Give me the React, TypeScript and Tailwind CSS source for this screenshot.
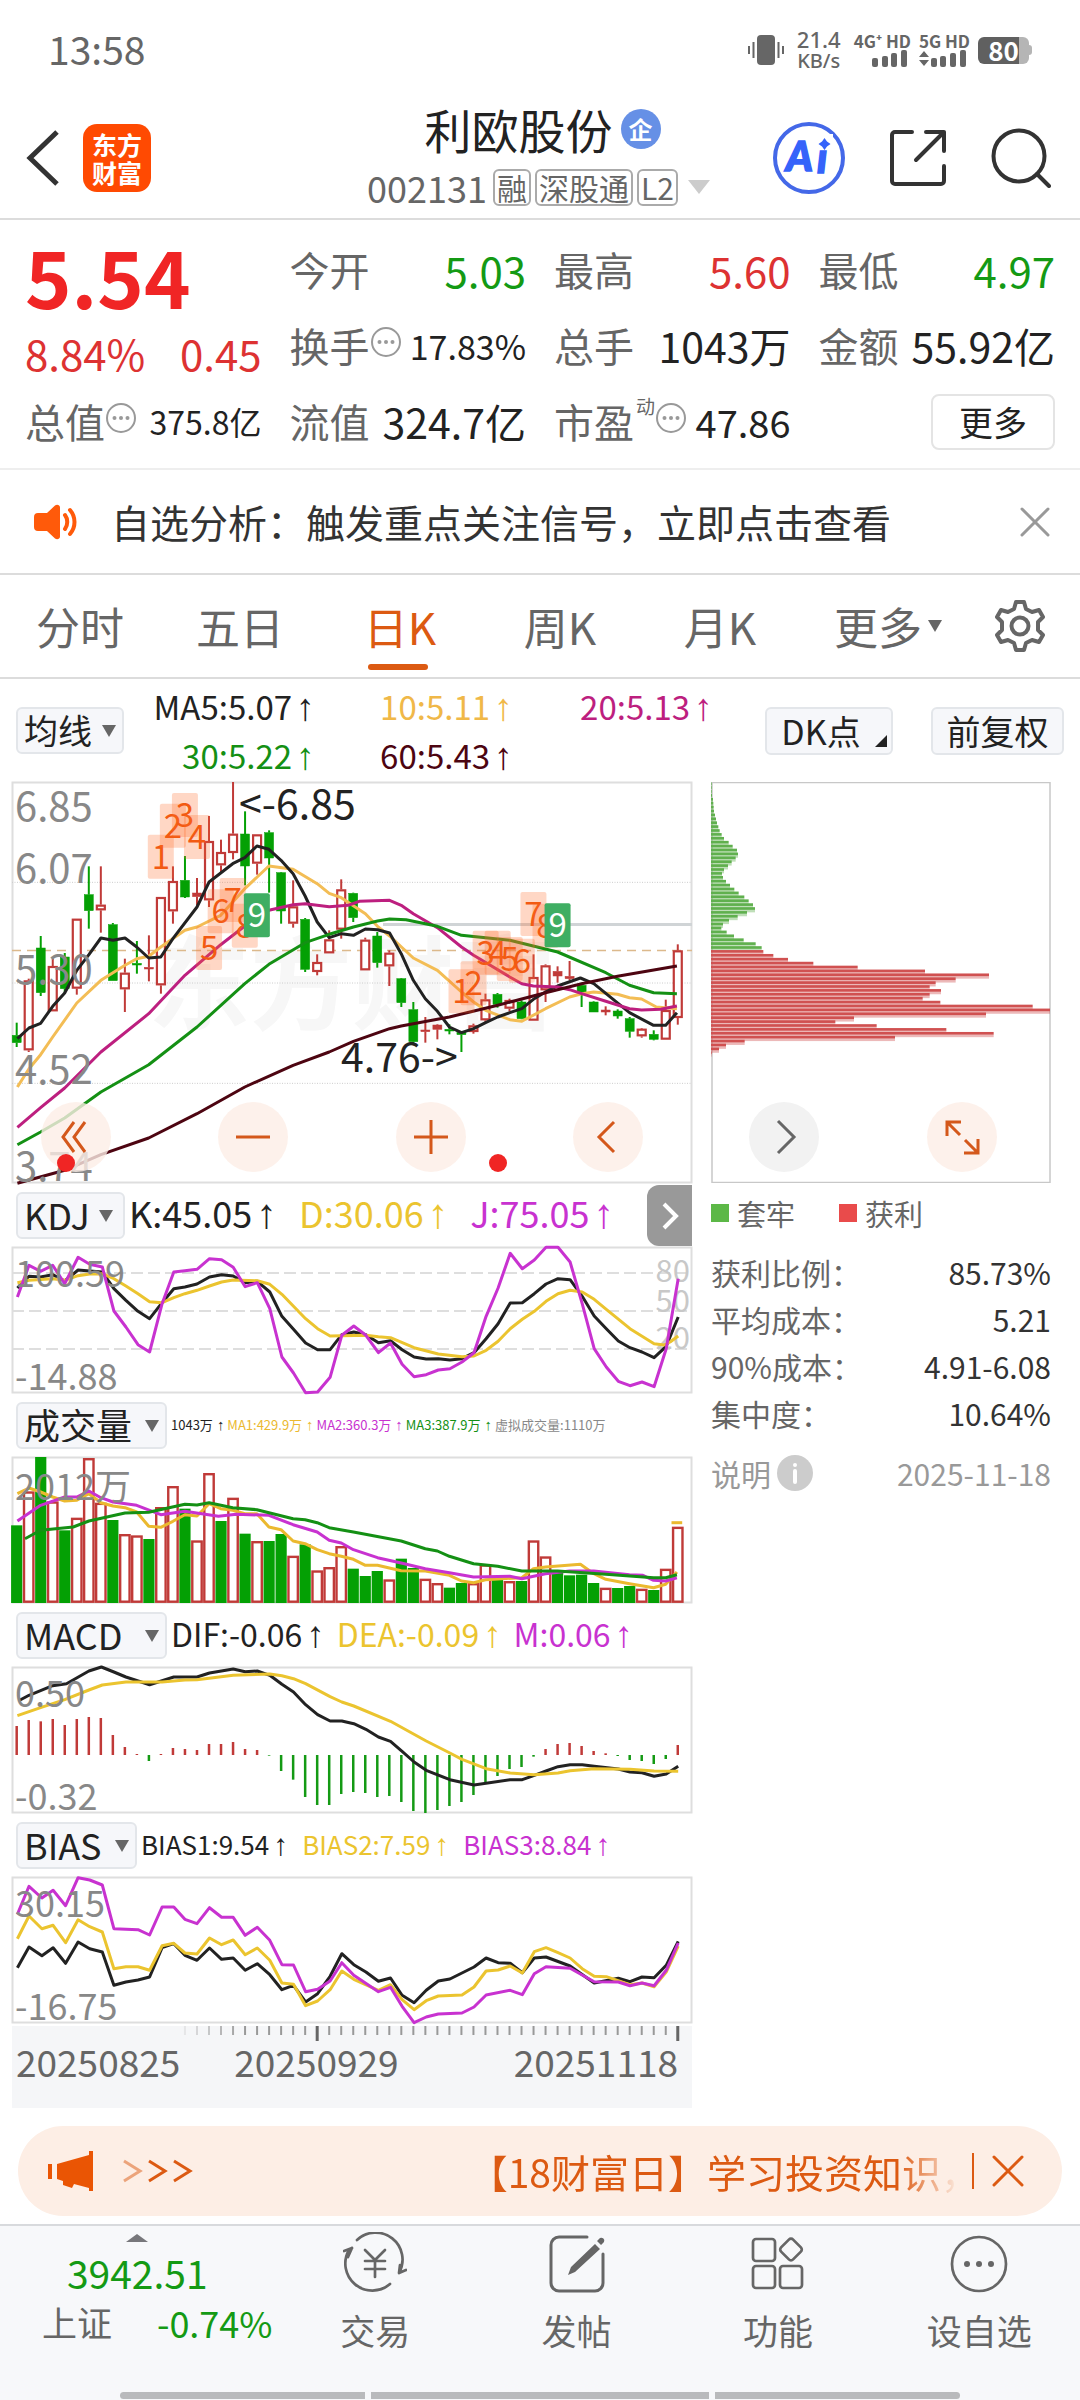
import React from "react";

const FONT = "font-['Noto_Sans_CJK_SC','Noto_Sans',sans-serif]";

/* ---------- chart data ---------- */

// Chart data lives on a 1522-unit wide grid; each unit row is a third of a pixel high.
const GRID_LEFT = 28;
const UNIT_X = 2.238;
const px = (x: number) => (x - GRID_LEFT) / UNIT_X;
const slot = (i: number) => px(38.5 + i * 26.9);

function trace(points: string, top: number) {
  return points
    .split(" ")
    .map((p) => {
      const [x, y] = p.split(",").map(Number);
      return `${px(x).toFixed(1)},${((y - top) / 3).toFixed(1)}`;
    })
    .join(" ");
}

type Candle = [kind: "g" | "r", bodyTop: number, bodyBottom: number, high: number, low: number];

const candles: Candle[] = [
  ["g", 790, 812, 752, 825], ["r", 625, 835, 620, 840], ["g", 528, 662, 492, 672], ["r", 582, 718, 560, 718],
  ["g", 555, 650, 543, 665], ["r", 440, 650, 440, 668], ["g", 368, 416, 283, 470], ["r", 398, 415, 283, 482],
  ["g", 458, 626, 453, 626], ["r", 602, 652, 560, 720], ["g", 574, 579, 507, 605], ["r", 586, 591, 490, 628],
  ["r", 375, 640, 375, 665], ["r", 327, 418, 283, 455], ["g", 325, 375, 252, 378], ["r", 363, 374, 318, 400],
  ["r", 207, 385, 132, 405], ["r", 240, 280, 203, 300], ["r", 185, 243, 30, 262], ["g", 186, 282, 118, 340],
  ["r", 187, 275, 187, 308], ["g", 182, 258, 175, 362], ["g", 302, 417, 300, 455], ["r", 403, 455, 325, 467],
  ["g", 442, 592, 438, 600], ["r", 570, 600, 547, 610], ["r", 502, 544, 475, 544], ["r", 352, 473, 322, 500],
  ["g", 364, 437, 362, 450], ["r", 503, 595, 497, 595], ["g", 492, 572, 480, 587], ["r", 542, 583, 535, 642],
  ["g", 620, 692, 618, 705], ["g", 713, 809, 690, 817], ["r", 774, 779, 735, 812], ["r", 759, 772, 757, 802],
  ["g", 772, 777, 757, 787], ["g", 781, 788, 780, 840], ["r", 760, 780, 755, 785], ["r", 682, 745, 665, 752],
  ["g", 667, 697, 663, 707], ["r", 684, 710, 680, 718], ["g", 690, 740, 685, 742], ["r", 615, 746, 547, 746],
  ["r", 580, 655, 577, 690], ["r", 598, 612, 583, 632], ["r", 613, 620, 567, 625], ["g", 640, 660, 632, 705],
  ["g", 690, 720, 688, 720], ["r", 714, 720, 703, 730], ["g", 717, 732, 712, 740], ["g", 740, 778, 735, 797],
  ["r", 770, 793, 768, 797], ["g", 787, 802, 775, 805], ["r", 714, 803, 683, 803], ["r", 535, 738, 517, 758],
];

const averages = [
  { color: "#f3bd55", points: "40,945 66,890 92,848 119,795 173,693 227,625 281,580 307,560 334,553 361,525 415,475 442,465 495,430 549,350 603,282 657,292 711,335 738,364 765,377 819,425 846,463 873,492 926,558 980,595 1034,660 1061,690 1088,715 1142,743 1169,748 1222,710 1276,675 1303,665 1330,660 1383,667 1410,677 1437,681 1470,705 1516,710" },
  { color: "#222222", points: "40,800 66,768 92,754 119,703 146,663 173,595 200,548 227,498 254,505 281,498 307,525 334,558 361,555 388,500 442,405 469,330 522,275 549,257 576,222 603,232 630,265 657,305 684,372 711,450 738,497 765,485 792,490 819,471 846,473 873,483 899,545 926,625 953,680 980,718 1007,765 1034,782 1061,770 1088,752 1115,735 1142,722 1169,710 1195,682 1222,660 1249,642 1300,618 1330,635 1410,722 1464,760 1491,760 1516,722" },
  { color: "#bd1f7f", points: "40,1066 92,1007 146,948 227,840 334,725 415,610 495,518 549,462 603,415 657,398 684,395 738,404 780,400 805,388 873,385 899,400 926,425 980,467 1034,525 1061,550 1142,615 1169,635 1195,642 1249,645 1276,653 1303,665 1357,688 1410,710 1437,714 1480,712 1516,702" },
  { color: "#149014", points: "40,1118 92,1080 146,1038 227,960 334,878 442,765 549,635 603,577 684,512 738,487 792,465 846,447 873,441 910,443 980,463 1034,490 1142,505 1249,540 1357,602 1410,640 1464,662 1516,665" },
  { color: "#4d0511", points: "40,1234 146,1195 227,1148 334,1098 442,1025 549,945 657,880 738,840 792,808 873,770 899,762 1007,735 1115,700 1222,662 1303,635 1383,613 1516,582" },
];

const counts: [label: string, x: number, top: number][] = [
  ["1", 361, 188], ["2", 388, 95], ["3", 415, 63], ["4", 442, 129], ["5", 469, 462], ["6", 495, 352],
  ["7", 522, 318], ["8", 549, 395], ["9", 576, 364],
  ["1", 1034, 592], ["2", 1061, 568], ["3", 1088, 476], ["4", 1115, 476], ["5", 1142, 495], ["6", 1169, 500],
  ["7", 1195, 360], ["8", 1222, 395], ["9", 1249, 394],
];

const volumes =
  "g1030 r928 g825 r958 g1045 r1007 r828 r962 g1014 r1056 r1060 g1071 r975 r912 g980 r1075 r873 g1017 r947 g1055 r1077 g1077 g1056 r1121 g1087 r1165 r1155 r1092 g1160 g1182 g1167 r1192 g1130 g1158 r1190 r1203 g1217 g1203 r1203 r1147 g1190 r1197 g1197 r1075 r1123 g1172 g1180 g1178 g1203 r1217 g1218 g1212 r1220 g1224 r1160 r1034"
    .split(" ")
    .map((v) => ({ up: v[0] === "r", y: Number(v.slice(1)) }));

const macdBars = [
  387, 369, 373, 366, 384, 366, 360, 363, 414, 450, 471, 492, 471, 453, 456, 459, 441, 441, 435, 456, 459, 476, 522,
  548, 600, 624, 624, 591, 585, 588, 600, 597, 615, 642, 648, 639, 627, 615, 594, 561, 537, 516, 510, 479, 456, 441,
  438, 447, 462, 469, 477, 489, 492, 501, 486, 444,
];

const costBars = [
  2, 2, 2, 3, 6, 7, 8, 9, 12, 15, 18, 22, 26, 32, 39, 53, 65, 78, 81, 74, 62, 51, 39, 33, 36, 45, 57, 70, 83, 100, 113,
  126, 132, 108, 80, 54, 36, 31, 47, 69, 98, 134, 152, 157, 187, 231, 307, 440, 642, 834, 734, 674, 656, 690, 656,
  635, 688, 965, 1017, 825, 429, 373, 497, 706, 848, 552, 101, 45, 24, 2,
];

/* ---------- small pieces ---------- */

function Up() {
  return <span className="ml-1 font-['Liberation_Sans',sans-serif] text-[1.15em] leading-none">↑</span>;
}

function MoreDots() {
  return (
    <svg viewBox="0 0 32 32" className="mb-2 size-8 shrink-0" fill="none" stroke="#999" strokeWidth="2" aria-hidden="true">
      <circle cx="16" cy="16" r="14" />
      <g fill="#999" stroke="none">
        <circle cx="9.500" cy="16" r="2" />
        <circle cx="16" cy="16" r="2" />
        <circle cx="22.500" cy="16" r="2" />
      </g>
    </svg>
  );
}

function Quote({ label, children, className = "", dots }: { label: React.ReactNode; children: React.ReactNode; className?: string; dots?: boolean }) {
  return (
    <div className="flex h-[75px] items-center whitespace-nowrap">
      <span className="text-[40px] text-[#666]">{label}</span>
      {dots && <MoreDots />}
      <span className={`ml-auto ${className}`}>{children}</span>
    </div>
  );
}

function Picker({ label, options, className, arrow = "right-3" }: { label: string; options: string[]; className: string; arrow?: string }) {
  return (
    <div className={`relative shrink-0 ${className}`}>
      <select
        aria-label={label}
        className="block h-[47px] w-full appearance-none rounded-md border-2 border-[#e3e6ea] bg-[#f6f7fa] pb-0.5 pl-1.5 leading-none text-[#222]"
      >
        {options.map((o) => (
          <option key={o}>{o}</option>
        ))}
      </select>
      <svg viewBox="0 0 14 12" className={`pointer-events-none absolute top-[18px] h-3 w-3.5 ${arrow}`} fill="#666" aria-hidden="true">
        <path d="M0 0h14L7 12z" />
      </svg>
    </div>
  );
}

function Panel({ height, label, children }: { height: number; label: string; children: React.ReactNode }) {
  return (
    <svg viewBox={`0 0 680 ${height}`} className="block w-full overflow-visible" role="img" aria-label={label}>
      <rect x="0.500" y="0.500" width="679" height={height - 1} fill="none" stroke="#dedede" strokeWidth="2" />
      {children}
    </svg>
  );
}

function Line({ points, top, color }: { points: string; top: number; color: string }) {
  return <polyline points={trace(points, top)} fill="none" stroke={color} strokeWidth="3" strokeLinejoin="round" />;
}

function Axis({ y, children }: { y: number; children: React.ReactNode }) {
  return (
    <text x="3" y={y} fontSize="36" fill="#888">
      {children}
    </text>
  );
}

function RoundButton({ label, grey, children }: { label: string; grey?: boolean; children: React.ReactNode }) {
  return (
    <button
      type="button"
      aria-label={label}
      className={`flex size-[70px] items-center justify-center rounded-full ${grey ? "bg-[#f2f2f2]" : "bg-[#fdeee6]/80"}`}
    >
      <svg viewBox="0 0 40 40" className="size-10" fill="none" stroke={grey ? "#666" : "#d4581b"} strokeWidth="3">
        {children}
      </svg>
    </button>
  );
}

/* ---------- charts ---------- */

function PriceChart() {
  return (
    <div className="relative">
      <Panel height={401} label="日K线图">
        <text x="136" y="240" fontSize="102" fontWeight="700" fill="#f7f7f7">东方财富</text>
        {[331, 633, 934].map((y) => (
          <line key={y} x1="0" x2="680" y1={(y - 30) / 3} y2={(y - 30) / 3} stroke="#ccc" strokeDasharray="1 1.500" />
        ))}
        <line x1="371" x2="680" y1="142.500" y2="142.500" stroke="#d0d4d6" strokeWidth="3" />
        <line x1="0" x2="680" y1="168.500" y2="168.500" stroke="#dcb98c" strokeWidth="1.500" strokeDasharray="9 6" />
        {candles.map(([kind, top, bottom, high, low], i) => {
          const x = slot(i);
          const y = (top - 30) / 3;
          const h = (bottom - top) / 3;
          const color = kind === "g" ? "#04a004" : "#c03a38";
          const hollow = kind === "r" && h > 5;
          return (
            <g key={i} stroke={color} strokeWidth="2">
              <line x1={x} x2={x} y1={(high - 30) / 3} y2={y} />
              <line x1={x} x2={x} y1={y + h} y2={(low - 30) / 3} />
              {hollow ? (
                <rect x={x - 4} y={y + 1} width="8" height={h - 2} fill="#fff" strokeWidth="2.200" />
              ) : (
                <rect x={x - 4.500} y={y} width="9" height={h} fill={color} strokeWidth="0.500" />
              )}
            </g>
          );
        })}
        {averages.map((a) => (
          <Line key={a.color} points={a.points} top={30} color={a.color} />
        ))}
        {counts.map(([label, x, top], i) => {
          const nine = label === "9";
          return (
            <g key={i}>
              <rect x={px(x) - 13} y={(top - 30) / 3} width="26" height="44" rx="2" fill={nine ? "#3fae63" : "#ff6a2a"} fillOpacity={nine ? 1 : 0.27} />
              <text x={px(x)} y={(top - 30) / 3 + 34} fontSize="33" textAnchor="middle" fill={nine ? "#fff" : "#f25a12"}>{label}</text>
            </g>
          );
        })}
        {[["6.85", 39], ["6.07", 101], ["5.30", 202], ["4.52", 302], ["3.74", 399]].map(([t, y]) => (
          <text key={t} x="3" y={y} fontSize="40" fill="#888">{t}</text>
        ))}
        <text x="227" y="37" fontSize="41" fill="#222">&lt;-6.85</text>
        <text x="329" y="290" fontSize="41" fill="#222">4.76-&gt;</text>
      </Panel>
      <div className="absolute right-[49px] bottom-[11px] left-[29px] flex justify-between">
        <RoundButton label="快速左移"><path d="M18 5 7 20l11 15M29 5 18 20l11 15" /></RoundButton>
        <RoundButton label="缩小"><path d="M3 20h34" /></RoundButton>
        <RoundButton label="放大"><path d="M3 20h34M20 3v34" /></RoundButton>
        <RoundButton label="左移"><path d="M26 5 11 20l15 15" /></RoundButton>
      </div>
      <i className="absolute bottom-[11px] left-[45px] size-[18px] rounded-full bg-[#f02524]" />
      <i className="absolute bottom-[11px] left-[477px] size-[18px] rounded-full bg-[#f02524]" />
    </div>
  );
}

function KdjChart() {
  return (
    <Panel height={146} label="KDJ">
      {[26, 64, 102].map((y) => (
        <line key={y} x1="0" x2="680" y1={y} y2={y} stroke="#dedede" strokeWidth="2" strokeDasharray="12 5" />
      ))}
      {[["80", 35], ["50", 65], ["20", 102]].map(([t, y]) => (
        <text key={t} x="678" y={y} fontSize="31" textAnchor="end" fill="#c8c8c8">{t}</text>
      ))}
      <Line top={195} color="#222" points="40,318 66,283 92,285 119,278 146,297 176,264 202,267 230,270 256,320 283,355 310,388 336,410 364,362 390,320 415,315 442,306 470,285 497,278 523,282 550,302 577,298 605,330 632,403 658,442 685,483 712,503 740,503 766,458 793,450 820,458 848,482 875,476 901,503 928,525 955,531 982,530 1008,534 1035,530 1062,512 1089,470 1116,425 1143,363 1170,362 1197,335 1223,306 1250,290 1277,293 1304,343 1331,402 1358,440 1385,477 1411,497 1438,510 1465,527 1492,493 1519,405" />
      <Line top={195} color="#ebc42f" points="40,302 66,295 119,290 146,295 176,281 202,276 230,275 256,290 283,312 310,335 336,359 364,362 390,347 415,335 442,325 470,312 497,300 523,294 577,296 605,307 632,337 658,373 685,410 712,440 740,462 820,460 848,464 875,467 928,497 982,516 1035,524 1062,522 1089,505 1116,478 1143,440 1170,412 1197,388 1223,358 1250,335 1277,325 1304,330 1331,352 1358,382 1411,440 1465,485 1487,489 1503,478 1519,462" />
      <Line top={195} color="#c832d0" points="40,345 66,250 92,268 119,250 146,305 176,226 202,247 230,255 256,387 283,435 310,488 336,510 364,365 390,270 415,266 442,262 470,230 497,233 523,256 550,314 577,302 605,380 632,525 658,573 685,632 712,630 740,586 766,460 793,432 820,460 848,512 875,483 901,547 928,584 955,578 982,564 1008,560 1035,540 1062,512 1089,403 1116,318 1143,214 1170,260 1197,234 1223,196 1250,196 1277,240 1304,365 1331,500 1358,555 1385,598 1411,611 1438,600 1465,614 1492,500 1519,290" />
      <Axis y={40}>100.59</Axis>
      <Axis y={143}>-14.88</Axis>
    </Panel>
  );
}

function VolumeChart() {
  return (
    <Panel height={146} label="成交量">
      {volumes.map(({ up, y }, i) => {
        const top = (y - 825) / 3;
        return up ? (
          <rect key={i} x={slot(i) - 4.700} y={top + 1.200} width="9.400" height={143.500 - top} fill="#fff" stroke="#c03a38" strokeWidth="2.400" />
        ) : (
          <rect key={i} x={slot(i) - 5.600} y={top} width="11.200" height={146 - top} fill="#04a004" />
        );
      })}
      <Line top={825} color="#ebb92f" points="40,935 66,918 92,930 119,945 146,957 173,955 200,935 227,962 254,972 281,977 307,990 334,1033 361,1036 388,1018 415,998 442,1002 469,965 495,980 522,985 549,995 576,995 603,1035 630,1043 657,1077 684,1085 711,1103 738,1115 765,1123 792,1132 819,1150 846,1150 899,1166 953,1167 1007,1180 1034,1197 1061,1202 1088,1193 1169,1187 1195,1160 1222,1155 1300,1147 1330,1175 1357,1192 1410,1205 1464,1217 1491,1207 1516,1170" />
      <Line top={825} color="#c832d0" points="40,1017 92,970 146,945 173,945 200,927 227,947 254,960 307,970 361,998 415,988 490,1003 530,997 603,1000 657,1028 711,1050 738,1075 765,1083 792,1103 846,1127 899,1143 953,1160 1007,1172 1061,1185 1142,1183 1169,1190 1222,1175 1276,1167 1330,1167 1410,1178 1440,1180 1464,1195 1491,1197 1516,1187" />
      <Line top={825} color="#149014" points="57,1070 92,1045 165,1035 200,1017 281,993 334,991 415,967 442,969 469,962 522,977 576,983 657,1010 684,1013 711,1022 738,1037 792,1050 899,1077 953,1100 980,1107 1007,1123 1061,1145 1115,1153 1169,1167 1249,1167 1357,1177 1464,1187 1491,1187 1516,1178" />
      <Line top={825} color="#ebb92f" points="1504,1022 1528,1022" />
      <Axis y={43}>2012万</Axis>
    </Panel>
  );
}

function MacdChart() {
  return (
    <Panel height={146} label="MACD">
      {macdBars.map((y, i) => (
        <line key={i} x1={slot(i)} x2={slot(i)} y1="88" y2={(y - 210) / 3} stroke={y > 474 ? "#149a14" : "#c03a38"} strokeWidth="2.500" />
      ))}
      <Line top={210} color="#222" points="45,310 66,295 119,266 150,260 200,222 228,210 256,225 283,240 336,263 390,240 442,240 470,228 523,216 550,224 577,222 605,235 632,262 658,285 685,323 712,353 740,372 766,372 793,380 820,397 848,420 875,433 901,463 928,495 955,520 1008,548 1062,564 1143,548 1170,548 1197,535 1223,522 1250,509 1277,503 1304,503 1331,508 1385,516 1411,525 1438,527 1465,538 1492,531 1519,508" />
      <Line top={210} color="#ebc42f" points="40,356 92,332 146,308 200,279 230,264 283,255 364,255 415,249 442,248 523,235 605,231 632,236 658,245 685,260 740,299 766,315 793,327 875,373 955,432 1008,468 1035,487 1089,515 1143,528 1197,533 1250,528 1277,521 1331,515 1411,517 1465,522 1519,523" />
      <Axis y={40}>0.50</Axis>
      <Axis y={143}>-0.32</Axis>
    </Panel>
  );
}

function BiasChart() {
  return (
    <Panel height={146} label="BIAS">
      <Line top={840} color="#222" points="40,1112 66,1050 95,1076 120,1052 148,1099 176,1035 202,1055 230,1065 256,1165 283,1155 310,1149 336,1140 364,1052 390,1040 415,1075 442,1090 470,1053 497,1087 523,1083 550,1120 577,1100 605,1133 632,1178 658,1165 685,1215 712,1190 740,1138 766,1070 793,1103 820,1125 848,1153 875,1143 901,1195 928,1217 955,1180 982,1152 1008,1146 1062,1110 1089,1083 1116,1097 1143,1099 1170,1127 1197,1083 1223,1080 1277,1107 1331,1158 1385,1144 1411,1154 1438,1140 1465,1142 1492,1105 1519,1033" />
      <Line top={840} color="#ebc42f" points="40,1025 66,957 95,995 120,985 148,1037 176,968 202,989 230,1005 256,1115 283,1109 310,1109 336,1120 364,1046 390,1039 415,1068 442,1071 470,1023 497,1043 523,1029 550,1073 577,1053 605,1090 632,1158 658,1162 685,1226 712,1212 740,1178 766,1122 793,1147 848,1180 875,1163 901,1208 928,1238 955,1211 982,1197 1035,1194 1062,1170 1089,1122 1116,1119 1143,1107 1170,1128 1197,1064 1223,1052 1250,1067 1277,1083 1304,1115 1331,1138 1358,1139 1411,1163 1438,1158 1465,1169 1492,1125 1519,1047" />
      <Line top={840} color="#c832d0" points="40,952 66,868 95,903 120,880 148,926 176,842 202,849 230,864 256,995 310,998 336,1014 364,930 390,930 415,967 442,980 470,932 497,961 523,961 550,1015 577,991 605,1030 632,1103 658,1104 685,1184 712,1177 740,1152 766,1097 793,1135 848,1184 875,1171 901,1228 928,1277 955,1260 982,1251 1035,1248 1062,1230 1089,1194 1143,1180 1170,1193 1197,1130 1223,1109 1277,1114 1331,1154 1385,1155 1411,1166 1438,1158 1465,1166 1492,1120 1519,1038" />
      <Axis y={40}>30.15</Axis>
      <Axis y={143}>-16.75</Axis>
    </Panel>
  );
}

function TimeAxis() {
  return (
    <div className="mt-[3px] bg-[#f5f6f8] pb-7">
      <svg viewBox="0 0 680 16" className="block w-full" aria-hidden="true">
        {Array.from({ length: 42 }, (_, n) => n + 14).map((i) => {
          const major = i === 25 || i === 55;
          return (
            <line
              key={i}
              x1={slot(i)}
              x2={slot(i)}
              y1="0"
              y2={major ? 15 : 9}
              stroke={major ? "#666" : "#999"}
              strokeWidth={major ? 3 : 2}
              opacity={Math.min(1, (i - 13) / 6)}
            />
          );
        })}
      </svg>
      <div className="flex pr-[14px] pl-1 text-[37px] leading-[38px] text-[#666]">
        <span>20250825</span>
        <span className="ml-[54px]">20250929</span>
        <span className="ml-auto">20251118</span>
      </div>
    </div>
  );
}

function IndicatorRow({ children }: { children: React.ReactNode }) {
  return <div className="relative flex h-16 items-center whitespace-nowrap pl-1 leading-none">{children}</div>;
}

/* ---------- right column ---------- */

function CostPanel() {
  return (
    <aside>
      <div className="relative">
        <svg viewBox="0 0 340 401" className="block w-full" role="img" aria-label="筹码分布">
          <rect x="1" y="0.500" width="338" height="400" fill="none" stroke="#c8c8c8" strokeWidth="1.500" />
          {costBars.map((w, j) => {
            const green = j < 43;
            const y = (5 + 11.7 * j) / 3;
            return (
              <g key={j} fill={green ? "#60b04e" : "#d05151"}>
                <rect x="0" y={y + 1.300} width={w / 3} height="2.600" opacity="0.400" />
                <rect x="0" y={y - 1.300} width={w / 3} height="2.700" />
              </g>
            );
          })}
        </svg>
        <div className="absolute right-[54px] bottom-[11px] left-[38px] flex justify-between">
          <RoundButton label="右移" grey><path d="m14 4 16 16-16 16" /></RoundButton>
          <RoundButton label="全屏"><path d="M5 19V5h14M6 6l12 12M36 22v14H22M35 35 23 23" /></RoundButton>
        </div>
      </div>
      <div className="flex items-center pt-2 text-[29px] leading-[44px] text-[#666]">
        <i className="mr-2 size-[18px] bg-[#5cb847]" />套牢
        <i className="mr-2 ml-[44px] size-[18px] bg-[#e94b4b]" />获利
      </div>
      <dl className="mt-[14px] grid grid-cols-[auto_auto] text-[30px] leading-[47px]">
        {[["获利比例：", "85.73%"], ["平均成本：", "5.21"], ["90%成本：", "4.91-6.08"], ["集中度：", "10.64%"]].map(([k, v]) => (
          <React.Fragment key={k}>
            <dt className="text-[#666]">{k}</dt>
            <dd className="text-right text-[#333]">{v}</dd>
          </React.Fragment>
        ))}
      </dl>
      <div className="mt-[13px] flex items-center text-[30px] leading-[46px] text-[#999]">
        说明
        <button type="button" aria-label="说明" className="ml-1.5 flex size-9 items-center justify-center rounded-full bg-[#ccc]">
          <svg viewBox="0 0 36 36" className="size-9" stroke="#fff" strokeWidth="4" strokeLinecap="round">
            <path d="M18 16v11M18 10v.1" />
          </svg>
        </button>
        <time className="ml-auto">2025-11-18</time>
      </div>
    </aside>
  );
}

/* ---------- page sections ---------- */

function StatusBar() {
  return (
    <div className="flex h-[100px] items-center px-12 text-[#666]">
      <span className="pb-1 text-[39px] leading-none">13:58</span>
      <div className="ml-auto flex items-center">
        <svg viewBox="0 0 36 32" className="h-8 w-9" fill="#666" aria-hidden="true">
          <rect x="9" y="1" width="18" height="30" rx="4" />
          <path d="M4.500 8h2v16h-2zM0 12h2v8H0zM29.500 8h2v16h-2zM34 12h2v8h-2z" />
        </svg>
        <div className="ml-3 w-[46px] text-center font-['Noto_Sans'] text-[22px] leading-[20px] font-medium">
          21.4<br /><span className="text-[20px]">KB/s</span>
        </div>
        <div className="ml-3 text-[17px] leading-[15px] font-bold whitespace-nowrap">
          4G⁺ HD
          <svg viewBox="0 0 36 17" className="mt-0.5 ml-[18px] h-[17px] w-9" fill="#666" aria-hidden="true">
            <rect y="8" width="6" height="9" rx="2" /><rect x="10" y="6" width="6" height="11" rx="2" />
            <rect x="19" y="3" width="6" height="14" rx="2" /><rect x="29" width="6" height="17" rx="2" />
          </svg>
        </div>
        <div className="ml-2 text-[17px] leading-[15px] font-bold whitespace-nowrap">
          5G HD
          <svg viewBox="0 0 47 17" className="mt-0.5 h-[17px] w-[47px]" fill="#666" aria-hidden="true">
            <path d="m5 1 5 6H0zM5 16l5-6H0z" />
            <rect x="12" y="8" width="6" height="9" rx="2" /><rect x="21" y="6" width="6" height="11" rx="2" />
            <rect x="31" y="3" width="6" height="14" rx="2" /><rect x="41" width="6" height="17" rx="2" />
          </svg>
        </div>
        <div className="ml-2 flex items-center">
          <div className="flex h-[27px] w-[51px] items-center justify-center rounded-md bg-linear-to-r from-[#606060] from-80% to-[#b5b5b5] to-80% text-[26px] leading-none font-bold text-white">
            80
          </div>
          <i className="h-2.5 w-[3px] rounded-r bg-[#b5b5b5]" />
        </div>
      </div>
    </div>
  );
}

function Tag({ children }: { children: React.ReactNode }) {
  return <span className="rounded-md border-2 border-[#aaa] px-[2px] text-[30px] leading-[33px]">{children}</span>;
}

function Header() {
  return (
    <header className="grid h-[120px] grid-cols-[1fr_auto_1fr] items-center border-b-2 border-[#dcdcdc] pr-[29px] pb-6 pl-[26px]">
      <div className="flex items-center">
        <button type="button" aria-label="返回">
          <svg viewBox="0 0 34 56" className="h-14 w-[34px]" fill="none" stroke="#333" strokeWidth="5">
            <path d="M31 2 4 28l27 26" />
          </svg>
        </button>
        <a href="#home" className="ml-[23px] flex size-[68px] items-center justify-center rounded-[14px] bg-[#ff4a02] text-center text-[25px] leading-[28px] font-bold text-white">
          东方<br />财富
        </a>
      </div>
      <div className="flex flex-col items-center">
        <h1 className="flex items-center gap-2 pl-2 text-[47px] leading-[58px] text-[#222]">
          利欧股份
          <span className="flex size-10 items-center justify-center rounded-full bg-[#6690e6] text-[24px] leading-none font-bold text-white">企</span>
        </h1>
        <div className="flex items-center gap-1 text-[36px] leading-[58px] text-[#666]">
          002131
          <span className="flex gap-1 pl-0.5">
            <Tag>融</Tag>
            <Tag>深股通</Tag>
            <Tag>L2</Tag>
          </span>
          <svg viewBox="0 0 22 14" className="ml-1.5 h-3.5 w-[22px]" fill="#ccc" aria-hidden="true"><path d="M0 0h22L11 14z" /></svg>
        </div>
      </div>
      <div className="flex items-center justify-end gap-11">
        <button type="button" aria-label="Ai 助手">
          <svg viewBox="0 0 72 72" className="size-[72px]">
            <circle cx="36" cy="36" r="34" fill="none" stroke="#4468e8" strokeWidth="4" />
            <text x="13" y="49" fontSize="41" fontWeight="900" fontStyle="italic" fontFamily="Lato" fill="#3563fa" stroke="#3563fa" strokeWidth="1.500">A</text>
            <text x="44" y="51" fontSize="41" fontWeight="900" fontStyle="italic" fontFamily="Lato" fill="#3563fa" stroke="#3563fa" strokeWidth="1.500">i</text>
            <path d="M43 12h17v16H43z" fill="#fff" />
            <path d="m51.500 16 2.500 3.500 3.500 2.500-3.500 2.500-2.500 3.500-2.500-3.500-3.500-2.500 3.500-2.500z" fill="#3563fa" />
          </svg>
        </button>
        <button type="button" aria-label="分享">
          <svg viewBox="0 0 58 58" className="size-[58px]" fill="none" stroke="#333" strokeWidth="4" strokeLinecap="round" strokeLinejoin="round">
            <path d="M23 3H6a3 3 0 0 0-3 3v46a3 3 0 0 0 3 3h46a3 3 0 0 0 3-3V37M37 3h18v19M55 3 27 31" />
          </svg>
        </button>
        <button type="button" aria-label="搜索">
          <svg viewBox="0 0 60 60" className="size-[60px]" fill="none" stroke="#333" strokeWidth="4" strokeLinecap="round">
            <circle cx="28" cy="28" r="25.500" />
            <path d="m46 46 12 12" />
          </svg>
        </button>
      </div>
    </header>
  );
}

function Quotes() {
  return (
    <section className="grid grid-cols-4 gap-x-7 border-b-2 border-[#eee] px-[25px] pt-[12px] pb-[9px] leading-[75px] text-[#222]">
      <div className="row-span-2 text-[#dd3232]">
        <div className="pt-2 text-[79px] leading-[70px] font-bold text-[#f02525]">5.54</div>
        <div className="flex justify-between pt-3 text-[42px] leading-[62px]">
          <span>8.84%</span>
          <span>0.45</span>
        </div>
      </div>
      <Quote label="今开" className="text-[42px] text-[#149a14]">5.03</Quote>
      <Quote label="最高" className="text-[42px] text-[#dd3232]">5.60</Quote>
      <Quote label="最低" className="text-[42px] text-[#149a14]">4.97</Quote>
      <Quote label="换手" dots className="text-[34px]">17.83%</Quote>
      <Quote label="总手" className="text-[41px]">1043万</Quote>
      <Quote label="金额" className="text-[41px]">55.92亿</Quote>
      <Quote label="总值" dots className="text-[32px]">375.8亿</Quote>
      <Quote label="流值" className="text-[41px]">324.7亿</Quote>
      <Quote label={<>市盈<sup className="-top-6 ml-0.5 text-[19px]">动</sup></>} dots className="text-[38px]">47.86</Quote>
      <div className="flex items-center justify-end">
        <button type="button" className="w-[124px] rounded-lg border-2 border-[#e4e4e4] text-[34px] leading-[52px]">更多</button>
      </div>
    </section>
  );
}

function Notice() {
  return (
    <div className="flex h-[105px] items-center border-b-2 border-[#dcdcdc] pr-[30px] pl-[34px] text-[39px] text-[#333]">
      <svg viewBox="0 0 44 36" className="h-9 w-11 shrink-0" fill="#ff5a0a" aria-hidden="true">
        <path d="M4 9h9L21 1.500c2-1.500 5-.500 5 2v29c0 2.500-3 3.500-5 2L13 27H4a4 4 0 0 1-4-4V13a4 4 0 0 1 4-4z" />
        <path d="M31 11c3 4 3 10 0 14M36 6c6 7 6 17 0 24" fill="none" stroke="#ff5a0a" strokeWidth="4" strokeLinecap="round" />
      </svg>
      <a href="#signal" className="ml-[33px] whitespace-nowrap">自选分析：触发重点关注信号，立即点击查看</a>
      <button type="button" aria-label="关闭" className="ml-auto">
        <svg viewBox="0 0 30 30" className="size-[30px]" stroke="#999" strokeWidth="3" strokeLinecap="round"><path d="m2 2 26 26M28 2 2 28" /></svg>
      </button>
    </div>
  );
}

function Tabs() {
  return (
    <nav className="grid h-[104px] grid-cols-[repeat(6,160fr)_120fr] border-b-2 border-[#dcdcdc] text-[44px] text-[#666]">
      {["分时", "五日", "日K", "周K", "月K"].map((t) => (
        <button
          key={t}
          type="button"
          className={t === "日K" ? "relative text-[#dc5a12]" : ""}
        >
          {t}
          {t === "日K" && <i className="absolute bottom-[7px] left-12 h-[6px] w-[60px] rounded-full bg-[#dc5a12]" />}
        </button>
      ))}
      <button type="button" className="flex items-center justify-center gap-1.5 pl-4">
        更多
        <svg viewBox="0 0 14 12" className="h-3 w-3.5" fill="#666" aria-hidden="true"><path d="M0 0h14L7 12z" /></svg>
      </button>
      <button type="button" aria-label="设置" className="flex items-center justify-center">
        <svg viewBox="0 0 52 52" className="size-[52px]" fill="none" stroke="#666" strokeWidth="4" strokeLinejoin="round">
          <path d="M22 2h8l2 7 6 3 7-2 4 7-5 5v8l5 5-4 7-7-2-6 3-2 7h-8l-2-7-6-3-7 2-4-7 5-5v-8l-5-5 4-7 7 2 6-3z" />
          <circle cx="26" cy="26" r="8.500" />
        </svg>
      </button>
    </nav>
  );
}

function ChartToolbar() {
  return (
    <div className="flex h-[103px] items-center pr-4 pl-4 text-[34px] leading-[49px] whitespace-nowrap">
      <Picker label="主图指标" options={["均线", "BOLL"]} className="w-[108px]" arrow="right-2" />
      <div className="grid grid-cols-[191px_198px_200px] text-right text-[33px]">
        <span className="text-[#222]">MA5:5.07<Up /></span>
        <span className="text-[#f0b848]">10:5.11<Up /></span>
        <span className="text-[#bd1f7f]">20:5.13<Up /></span>
        <span className="text-[#149014]">30:5.22<Up /></span>
        <span className="text-[#4d0511]">60:5.43<Up /></span>
      </div>
      <button type="button" className="relative ml-auto w-[128px] rounded-md border-2 border-[#e3e6ea] bg-[#f6f7fa] pr-4 leading-[44px] text-[#222]">
        DK点
        <svg viewBox="0 0 12 12" className="absolute right-1 bottom-1.5 size-3" fill="#222" aria-hidden="true"><path d="M12 0v12H0z" /></svg>
      </button>
      <button type="button" className="ml-[38px] w-[133px] rounded-md border-2 border-[#e3e6ea] bg-[#f6f7fa] leading-[44px] text-[#222]">前复权</button>
    </div>
  );
}

function Banner() {
  return (
    <div className="mx-[18px] mt-[18px] flex h-[90px] items-center rounded-full bg-[#fdeee5] pr-[38px] pl-[30px] text-[#dc5a12]">
      <svg viewBox="0 0 46 40" className="h-10 w-[46px]" fill="#ea5504" aria-hidden="true">
        <path d="M0 13h4v15H0zM9 13 41 4V0h4v40h-4v-3l-15-4-2 4-9-3v-4l-6-2z" />
      </svg>
      <svg viewBox="0 0 70 24" className="ml-[29px] h-6 w-[70px]" fill="none" stroke="#dc5a12" strokeWidth="3" aria-hidden="true">
        <path d="m1 2 16 10L1 22" opacity="0.500" />
        <path d="m26 2 16 10-16 10M51 2l16 10-16 10" />
      </svg>
      <a href="#event" className="-mr-2 ml-auto mask-r-from-84% mask-r-to-96% text-[39px] leading-[54px] whitespace-nowrap">【18财富日】学习投资知识，</a>
      <i className="mr-[18px] h-9 w-0.5 bg-[#dc5a12]" />
      <button type="button" aria-label="关闭">
        <svg viewBox="0 0 32 32" className="size-8" stroke="#dc5a12" strokeWidth="3" strokeLinecap="round"><path d="m2 2 28 28M30 2 2 30" /></svg>
      </button>
    </div>
  );
}

const actions = [
  {
    label: "交易",
    icon: (
      <>
        <path d="M14 8a27 27 0 0 1 42 33M1 19l8-3M6 18a27 27 0 0 0 41 34M56 41l7-3M56 41l1-8M9 16l-4 9" />
        <path d="M22 18l10 10 10-10M32 28v17M22 29h20M22 37h20" />
      </>
    ),
  },
  {
    label: "发帖",
    icon: (
      <>
        <path d="M42 5H14a8 8 0 0 0-8 8v38a8 8 0 0 0 8 8h36a8 8 0 0 0 8-8V22" strokeWidth="3" />
        <path d="m50 12 5 5-25 23-7 3 3-8zM52 9l3-3a3 3 0 0 1 4 4l-3 3z" fill="#666" stroke="none" />
      </>
    ),
  },
  {
    label: "功能",
    icon: (
      <>
        <rect x="7" y="7" width="22" height="22" rx="3" />
        <rect x="7" y="34" width="22" height="22" rx="3" />
        <rect x="34" y="34" width="22" height="22" rx="3" />
        <rect x="36.500" y="9" width="17" height="17" rx="3" transform="rotate(45 45 17.500)" />
      </>
    ),
  },
  {
    label: "设自选",
    icon: (
      <>
        <circle cx="32" cy="32" r="27" />
        <g fill="#666" stroke="none">
          <circle cx="20" cy="32" r="3" />
          <circle cx="32" cy="32" r="3" />
          <circle cx="44" cy="32" r="3" />
        </g>
      </>
    ),
  },
];

function BottomBar() {
  return (
    <footer className="mt-2 border-t-2 border-[#d8dadd] bg-[#f7f8fa]">
      <div className="grid grid-cols-[274fr_repeat(4,201fr)] text-[35px] text-[#666]">
        <button type="button" className="flex flex-col items-center pt-2">
          <svg viewBox="0 0 22 8" className="h-2 w-[22px]" fill="#77777b" aria-hidden="true"><path d="M0 8 11 0l11 8z" /></svg>
          <span className="mt-1 text-[39px] leading-[52px] text-[#149a14]">3942.51</span>
          <span className="flex w-full justify-between pr-0.5 pl-[42px] leading-[48px]">
            上证<span className="text-[36px] text-[#149a14]">-0.74%</span>
          </span>
        </button>
        {actions.map((a) => (
          <button key={a.label} type="button" className="flex flex-col items-center pt-1.5">
            <svg viewBox="0 0 64 64" className="size-16" fill="none" stroke="#666" strokeWidth="2.700" strokeLinecap="round" strokeLinejoin="round">{a.icon}</svg>
            <span className="mt-2.5 leading-[48px]">{a.label}</span>
          </button>
        ))}
      </div>
      <div className="mx-auto mt-[38px] flex w-[840px] max-w-full gap-1.5 pb-[3px]">
        <i className="h-[7px] w-[245px] rounded-l-full bg-[#b9babc]" />
        <i className="h-[7px] flex-1 bg-[#b9babc]" />
        <i className="h-[7px] w-[245px] rounded-r-full bg-[#b9babc]" />
      </div>
    </footer>
  );
}

export default function App() {
  return (
    <div className={`w-full bg-white ${FONT}`}>
      <StatusBar />
      <Header />
      <Quotes />
      <Notice />
      <Tabs />
      <ChartToolbar />
      <main className="grid grid-cols-[680fr_340fr] items-start gap-x-[19px] pr-[29px] pl-[12px]">
        <div>
          <PriceChart />
          <IndicatorRow>
            <Picker label="副图一" options={["KDJ", "RSI"]} className="w-[109px] text-[36px]" />
            <div className="flex gap-[22px] pl-1 text-[36px]">
              <span className="text-[#222]">K:45.05<Up /></span>
              <span className="text-[#ebc42f]">D:30.06<Up /></span>
              <span className="text-[#c832d0]">J:75.05<Up /></span>
            </div>
            <button type="button" aria-label="展开" className="absolute top-0.5 right-0 flex h-[61px] w-[45px] items-center justify-center rounded-l-xl bg-[#999]">
              <svg viewBox="0 0 20 30" className="h-[30px] w-5" fill="none" stroke="#fff" strokeWidth="4"><path d="m4 3 12 12L4 27" /></svg>
            </button>
          </IndicatorRow>
          <KdjChart />
          <IndicatorRow>
            <Picker label="副图二" options={["成交量", "成交额"]} className="w-[151px] text-[36px]" arrow="right-2" />
            <div className="flex gap-[3px] pl-1 text-[13px]">
              <span className="text-[#222]">1043万<Up /></span>
              <span className="text-[#ebb92f]">MA1:429.9万<Up /></span>
              <span className="text-[#c832d0]">MA2:360.3万<Up /></span>
              <span className="text-[#149014]">MA3:387.9万<Up /></span>
              <span className="text-[#888]">虚拟成交量:1110万</span>
            </div>
          </IndicatorRow>
          <VolumeChart />
          <IndicatorRow>
            <Picker label="副图三" options={["MACD", "DMI"]} className="w-[151px] text-[36px]" arrow="right-2" />
            <div className="flex gap-3 pl-1 text-[32px]">
              <span className="text-[#222]">DIF:-0.06<Up /></span>
              <span className="text-[#ebc42f]">DEA:-0.09<Up /></span>
              <span className="text-[#c832d0]">M:0.06<Up /></span>
            </div>
          </IndicatorRow>
          <MacdChart />
          <IndicatorRow>
            <Picker label="副图四" options={["BIAS", "WR"]} className="w-[121px] text-[36px]" arrow="right-2" />
            <div className="flex gap-3.5 pl-1 text-[26px]">
              <span className="text-[#222]">BIAS1:9.54<Up /></span>
              <span className="text-[#ebc42f]">BIAS2:7.59<Up /></span>
              <span className="text-[#c832d0]">BIAS3:8.84<Up /></span>
            </div>
          </IndicatorRow>
          <BiasChart />
          <TimeAxis />
        </div>
        <CostPanel />
      </main>
      <Banner />
      <BottomBar />
    </div>
  );
}
